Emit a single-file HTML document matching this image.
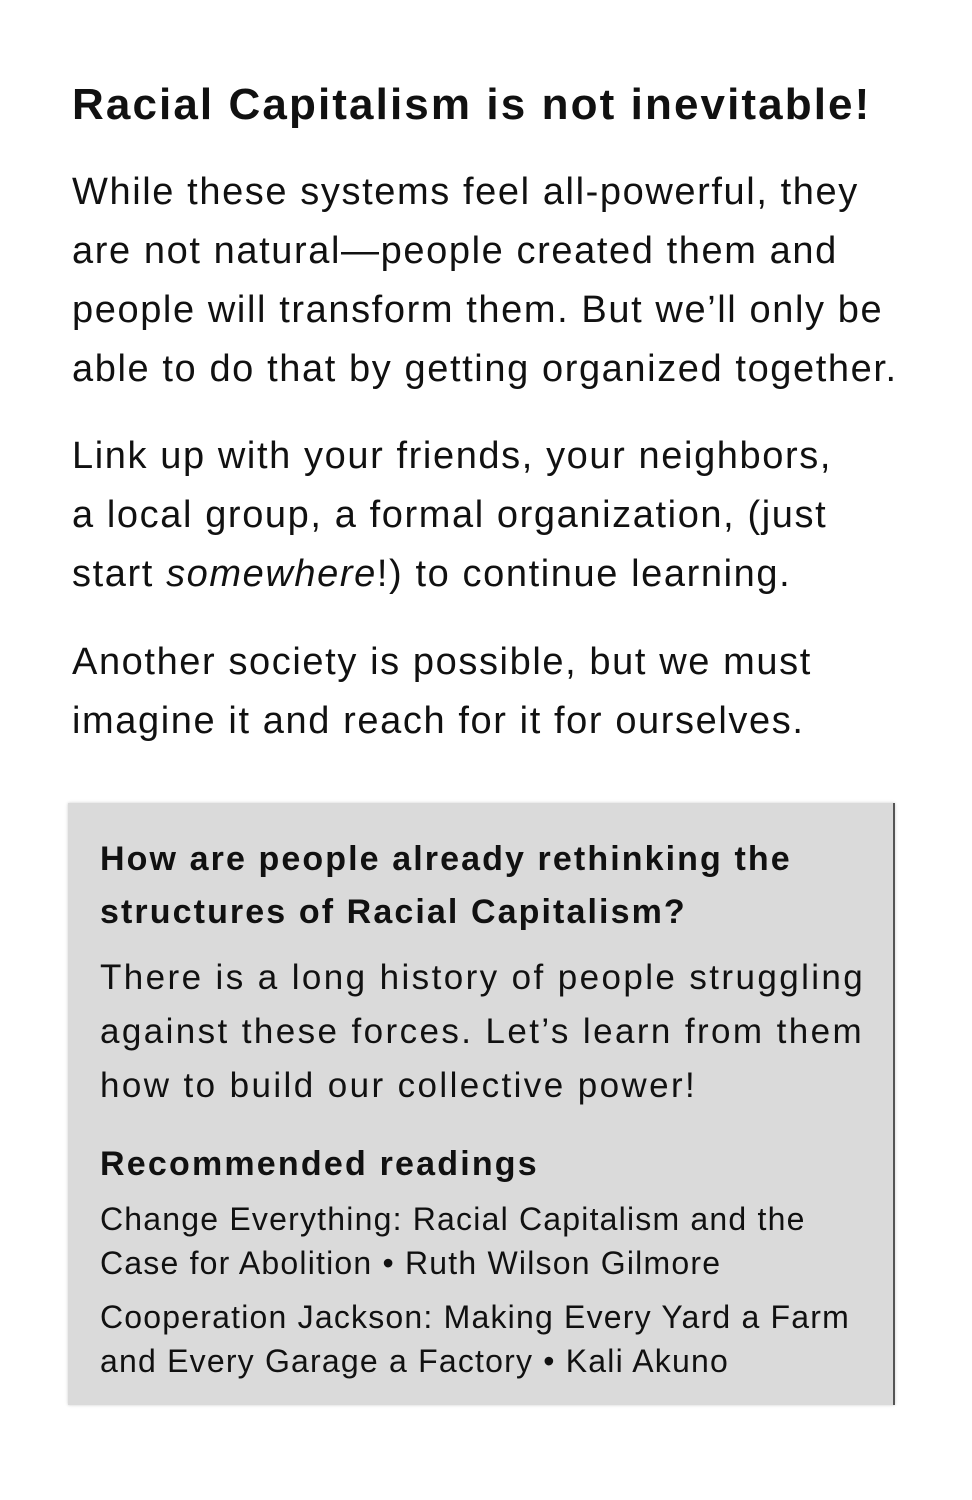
<!DOCTYPE html>
<html><head><meta charset="utf-8"><style>
body{margin:0;background:#fff;width:972px;height:1500px;position:relative;font-family:"Liberation Sans",sans-serif;color:#111;overflow:hidden}
.a{position:absolute;left:72px;white-space:nowrap}
h1{position:absolute;left:72px;top:80px;margin:0;font-size:44px;letter-spacing:2.1px;font-weight:bold;white-space:nowrap}
.p{font-size:38px;line-height:59px;letter-spacing:1.6px}
.box{position:absolute;left:68px;top:803px;width:825px;height:602px;background:#dadada;border-right:2px solid #555;box-shadow:0 0 3px #ccc}
.b{position:absolute;left:32px;white-space:nowrap}
.bh{font-size:34px;font-weight:bold;line-height:53px;letter-spacing:2.1px}
.bp{font-size:35px;line-height:54px;letter-spacing:2.4px}
.r{font-size:32px;line-height:44px;letter-spacing:1.2px}
</style></head><body>
<h1>Racial Capitalism is not inevitable!</h1>
<div class="a p" style="top:163px">While these systems feel all-powerful, they<br>are not natural—people created them and<br>people will transform them. But we’ll only be<br>able to do that by getting organized together.</div>
<div class="a p" style="top:427px">Link up with your friends, your neighbors,<br>a local group, a formal organization, (just<br>start <i>somewhere</i>!) to continue learning.</div>
<div class="a p" style="top:633px">Another society is possible, but we must<br>imagine it and reach for it for ourselves.</div>
<div class="box">
<div class="b bh" style="top:30px">How are people already rethinking the<br>structures of Racial Capitalism?</div>
<div class="b bp" style="top:148px">There is a long history of people struggling<br>against these forces. Let’s learn from them<br>how to build our collective power!</div>
<div class="b bh" style="top:335px;letter-spacing:2.2px">Recommended readings</div>
<div class="b r" style="top:394px">Change Everything: Racial Capitalism and the<br>Case for Abolition • Ruth Wilson Gilmore</div>
<div class="b r" style="top:492px">Cooperation Jackson: Making Every Yard a Farm<br>and Every Garage a Factory • Kali Akuno</div>
</div>
</body></html>
